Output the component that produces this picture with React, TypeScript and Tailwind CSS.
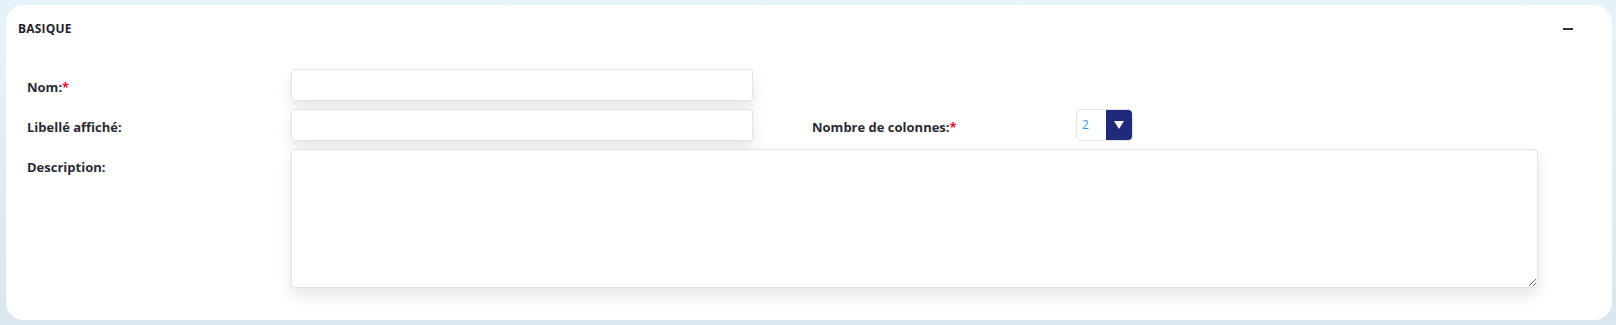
import { useState } from "react";

const labelCls =
  "pt-[10px] text-[13px] leading-4 font-bold text-[#2b2b33] whitespace-nowrap";
const inputCls =
  "h-8 w-full rounded-[3px] border border-[#e3e3e3] bg-white px-2 text-[12px] outline-none shadow-[0_7px_16px_rgba(0,0,0,0.1)]";

const Required = () => <span className="text-[#e2112d]">*</span>;

const App = () => {
  const [open, setOpen] = useState(true);
  const [nom, setNom] = useState("");
  const [libelle, setLibelle] = useState("");
  const [description, setDescription] = useState("");
  const [colonnes, setColonnes] = useState("2");

  return (
    <div
      className="h-[325px] overflow-hidden bg-gradient-to-b from-[#e7f3fa] to-[#dbe7ee] pt-[5px] pr-[4px] pb-[5px] pl-[6px]"
      style={{ fontFamily: '"Open Sans", "DejaVu Sans", sans-serif' }}
    >
      <div className="h-[315px] rounded-[18px] bg-white">
        <div className="flex h-[45px] items-center justify-between pl-3 pr-9 pt-[2px]">
          <span className="text-[12px] font-bold tracking-[0.2px] text-[#23232b]">
            BASIQUE
          </span>
          <button
            type="button"
            onClick={() => setOpen(!open)}
            className="flex h-4 w-4 items-center justify-center"
          >
            <span className="block h-[2px] w-[10px] bg-[#333]" />
          </button>
        </div>

        {open && (
          <div className="mt-[19px] grid grid-cols-[264px_462px_59px_264px_462px] gap-y-2 pl-[21px]">
            <label className={labelCls}>
              Nom:<Required />
            </label>
            <input
              className={inputCls}
              value={nom}
              onChange={(e) => setNom(e.target.value)}
            />
            <div className="col-span-3" />

            <label className={labelCls}>Libellé affiché:</label>
            <input
              className={inputCls}
              value={libelle}
              onChange={(e) => setLibelle(e.target.value)}
            />
            <div />
            <label className={labelCls}>
              Nombre de colonnes:<Required />
            </label>
            <div className="flex h-8 w-[57px] overflow-hidden rounded-[5px] border border-[#e3e3e3] bg-white">
              <span className="flex flex-1 items-center pl-[5px] text-[12px] text-[#3b9bd6]">
                {colonnes}
              </span>
              <button
                type="button"
                onClick={() => setColonnes(colonnes === "2" ? "3" : "2")}
                className="flex w-[26px] items-center justify-center bg-[#1f2a7a]"
              >
                <svg width="10" height="8" viewBox="0 0 10 8">
                  <path d="M0 0h10L5 8z" fill="#fff" />
                </svg>
              </button>
            </div>

            <label className={labelCls}>Description:</label>
            <textarea
              className="col-span-4 h-[139px] rounded-[3px] border border-[#e3e3e3] bg-white p-2 text-[12px] outline-none shadow-[0_7px_16px_rgba(0,0,0,0.1)]"
              value={description}
              onChange={(e) => setDescription(e.target.value)}
            />
          </div>
        )}
      </div>
    </div>
  );
};

export default App;
